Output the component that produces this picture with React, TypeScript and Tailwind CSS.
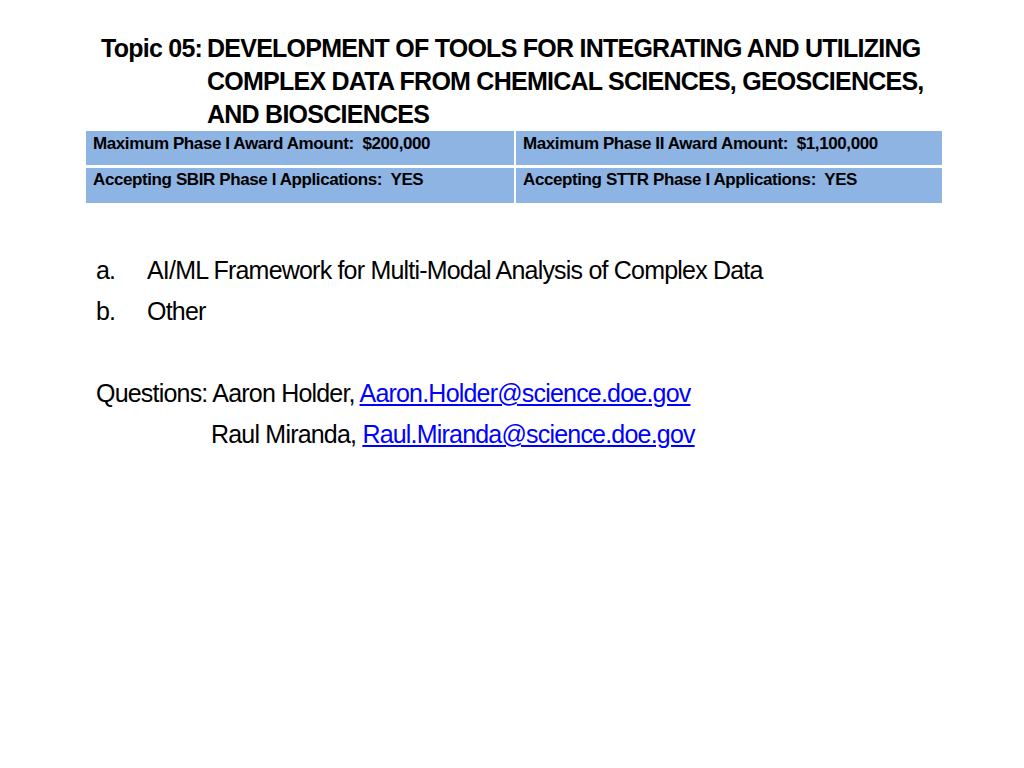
export default function App() {
  const f = { fontFamily: '"Liberation Sans", Arial, sans-serif' };
  return (
    <div className="w-[1024px] h-[768px] bg-white text-black" style={f}>
      <div className="pt-[32px] pl-[101px] flex font-bold text-[25px] leading-[33px] tracking-[-0.75px]">
        <span className="w-[106px] shrink-0 whitespace-nowrap">Topic 05:</span>
        <span className="whitespace-nowrap">DEVELOPMENT OF TOOLS FOR INTEGRATING AND UTILIZING<br />COMPLEX DATA FROM CHEMICAL SCIENCES, GEOSCIENCES,<br />AND BIOSCIENCES</span>
      </div>
      <div className="ml-[86px] w-[856px] flex flex-col gap-[3px] font-bold text-[17px] leading-[20px] tracking-[-0.4px]">
        <div className="flex gap-[2px]">
          <div className="w-[428px] h-[34px] bg-[#8eb4e3] px-[7px] pt-[3px]">Maximum Phase I Award Amount:&nbsp; $200,000</div>
          <div className="flex-1 h-[34px] bg-[#8eb4e3] px-[7px] pt-[3px]">Maximum Phase II Award Amount:&nbsp; $1,100,000</div>
        </div>
        <div className="flex gap-[2px]">
          <div className="w-[428px] h-[35px] bg-[#8eb4e3] px-[7px] pt-[2px]">Accepting SBIR Phase I Applications:&nbsp; YES</div>
          <div className="flex-1 h-[35px] bg-[#8eb4e3] px-[7px] pt-[2px]">Accepting STTR Phase I Applications:&nbsp; YES</div>
        </div>
      </div>
      <div className="mt-[47px] ml-[96px] text-[25px] leading-[41px] tracking-[-0.8px]">
        <div className="flex"><span className="w-[51px]">a.</span><span>AI/ML Framework for Multi-Modal Analysis of Complex Data</span></div>
        <div className="flex"><span className="w-[51px]">b.</span><span>Other</span></div>
        <div className="mt-[41px]">Questions: Aaron Holder, <span className="text-[#0000ff] underline">Aaron.Holder@science.doe.gov</span></div>
        <div className="pl-[115px]">Raul Miranda, <span className="text-[#0000ff] underline">Raul.Miranda@science.doe.gov</span></div>
      </div>
    </div>
  );
}
